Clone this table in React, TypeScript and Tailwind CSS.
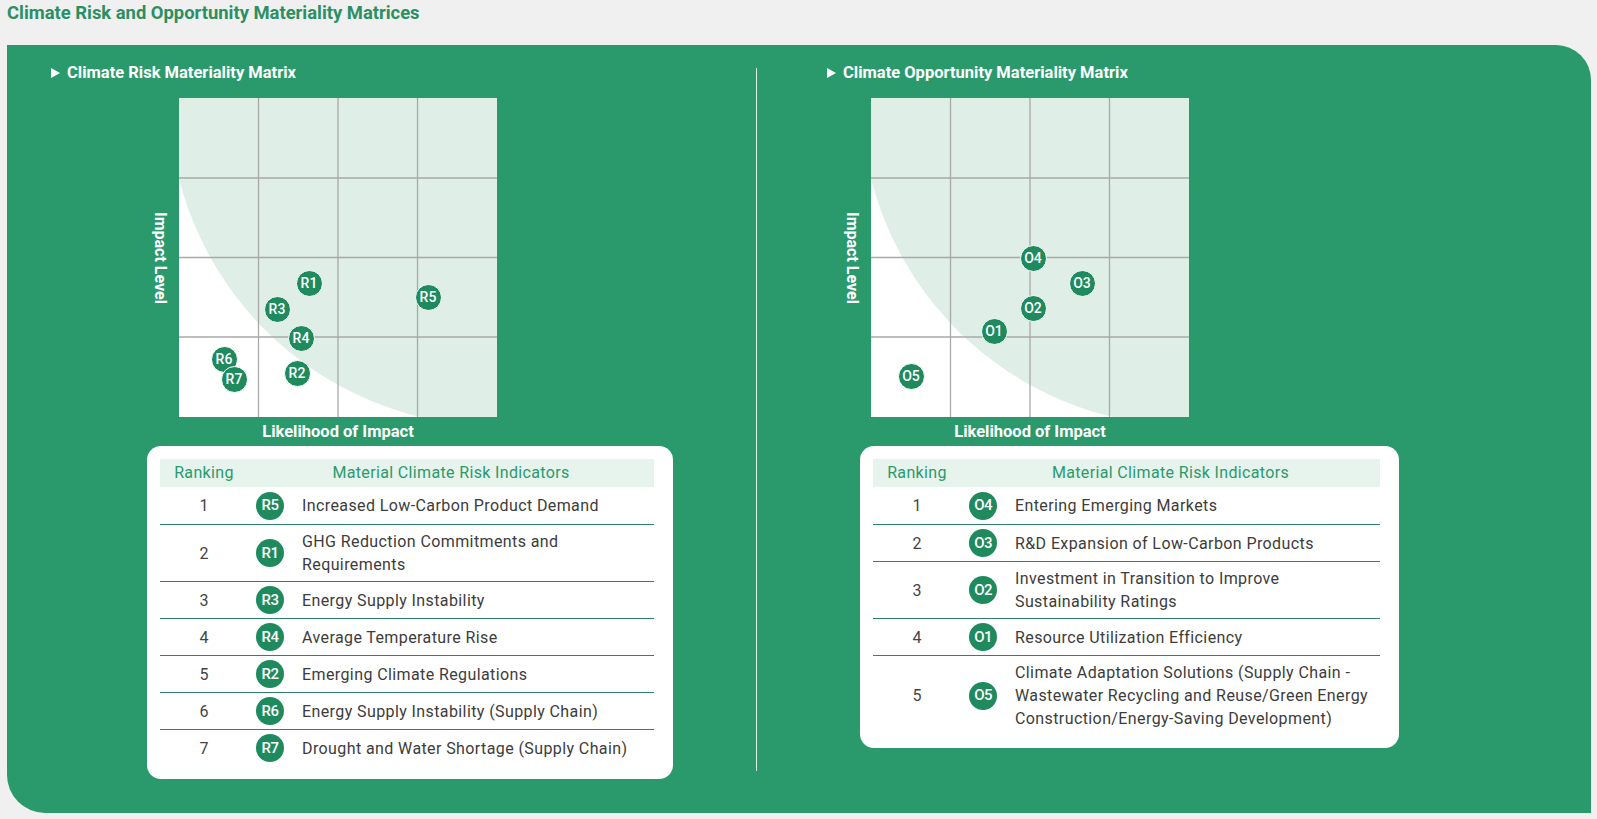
/*
 * Climate Risk and Opportunity Materiality Matrices
 * - two matrices with plotted items
 * - ranking tables below each matrix
 */

type Point = { id: string; x: number; y: number };
type Row = { rank: number; id: string; text: string };

const riskPoints: Point[] = [
  { id: "R1", x: 130, y: 185 },
  { id: "R3", x: 98, y: 211 },
  { id: "R5", x: 249, y: 199 },
  { id: "R4", x: 122, y: 240 },
  { id: "R2", x: 118, y: 275 },
  { id: "R6", x: 45, y: 261 },
  { id: "R7", x: 55, y: 281 },
];

const oppPoints: Point[] = [
  { id: "O4", x: 162, y: 160 },
  { id: "O3", x: 211, y: 185 },
  { id: "O2", x: 162, y: 210 },
  { id: "O1", x: 123, y: 233 },
  { id: "O5", x: 40, y: 278 },
];

const riskRows: Row[] = [
  { rank: 1, id: "R5", text: "Increased Low-Carbon Product Demand" },
  { rank: 2, id: "R1", text: "GHG Reduction Commitments and Requirements" },
  { rank: 3, id: "R3", text: "Energy Supply Instability" },
  { rank: 4, id: "R4", text: "Average Temperature Rise" },
  { rank: 5, id: "R2", text: "Emerging Climate Regulations" },
  { rank: 6, id: "R6", text: "Energy Supply Instability (Supply Chain)" },
  { rank: 7, id: "R7", text: "Drought and Water Shortage (Supply Chain)" },
];

const oppRows: Row[] = [
  { rank: 1, id: "O4", text: "Entering Emerging Markets" },
  { rank: 2, id: "O3", text: "R&D Expansion of Low-Carbon Products" },
  { rank: 3, id: "O2", text: "Investment in Transition to Improve Sustainability Ratings" },
  { rank: 4, id: "O1", text: "Resource Utilization Efficiency" },
  {
    rank: 5,
    id: "O5",
    text: "Climate Adaptation Solutions (Supply Chain - Wastewater Recycling and Reuse/Green Energy Construction/Energy-Saving Development)",
  },
];

function SectionTitle({ label }: { label: string }) {
  return (
    <div className="flex items-center gap-[7px] h-[20px] text-white text-[16.5px] font-bold leading-[20px]">
      <svg width="9" height="10" viewBox="0 0 9 10">
        <polygon points="0,0 9,5 0,10" fill="#ffffff" />
      </svg>
      <span>{label}</span>
    </div>
  );
}

function Matrix({ points }: { points: Point[] }) {
  const size = 318;
  const step = size / 4;
  return (
    <div className="relative w-[318px] h-[319px]">
      <svg width="318" height="319" viewBox="0 0 318 319" className="block">
        <rect x="0" y="0" width="318" height="319" fill="#ffffff" />
        <circle cx="318" cy="0" r="328" fill="#dfeee7" />
        {[1, 2, 3].map((i) => (
          <g key={i}>
            <line x1={i * step} y1="0" x2={i * step} y2="319" stroke="#a9a9a9" strokeWidth="1.3" />
            <line x1="0" y1={i * step + 0.5} x2="318" y2={i * step + 0.5} stroke="#a9a9a9" strokeWidth="1.3" />
          </g>
        ))}
      </svg>
      {points.map((p) => (
        <div
          key={p.id}
          className="absolute w-[27px] h-[27px] -ml-[13.5px] -mt-[13.5px] rounded-full bg-[#1f8a5e] border border-white flex items-center justify-center text-white text-[14px] font-medium leading-none"
          style={{ left: p.x, top: p.y }}
        >
          {p.id}
        </div>
      ))}
    </div>
  );
}

function MatrixBlock({ points, labelLeft }: { points: Point[]; labelLeft: number }) {
  return (
    <div className="flex items-center mt-[15px]" style={{ paddingLeft: labelLeft }}>
      <div className="w-[18px] [writing-mode:vertical-rl] text-white text-[16px] font-bold leading-[18px] text-center">
        Impact Level
      </div>
      <div className="ml-[10px]">
        <Matrix points={points} />
      </div>
    </div>
  );
}

function RankTable({ rows, width, left }: { rows: Row[]; width: number; left: number }) {
  return (
    <div
      className="mt-[5px] bg-white rounded-[14px] pt-[13px] pb-[13px] pl-[13px] pr-[19px]"
      style={{ width, marginLeft: left }}
    >
      <div className="flex h-[28px] items-center bg-[#e7f3ed] text-[#2a9a6c] text-[16px] tracking-[0.35px] leading-[28px]">
        <div className="w-[88px] text-center">Ranking</div>
        <div className="flex-1 text-center">Material Climate Risk Indicators</div>
      </div>
      {rows.map((r, i) => (
        <div
          key={r.id}
          className={`flex items-center min-h-[37px] ${i > 0 ? "border-t border-[#2e826b]" : ""}`}
        >
          <div className="w-[88px] text-center text-[16px] leading-[23px] text-[#444444]">{r.rank}</div>
          <div className="ml-[8px] w-[28px] h-[28px] shrink-0 rounded-full bg-[#1f8a5e] flex items-center justify-center text-white text-[15px] font-medium tracking-[-0.6px] leading-none">
            {r.id}
          </div>
          <div className="ml-[18px] flex-1 pr-[8px] py-[5px] text-[16px] leading-[23px] tracking-[0.4px] text-[#3c3c3c]">
            {r.text}
          </div>
        </div>
      ))}
    </div>
  );
}

export default function App() {
  return (
    <div className="min-h-screen bg-[#f0f0f0] font-['Roboto','Liberation_Sans',sans-serif]">
      <h2 className="pl-[7px] pt-[2px] text-[18.4px] font-bold leading-[22px] text-[#2b8f64]">
        Climate Risk and Opportunity Materiality Matrices
      </h2>

      <div className="ml-[7px] mt-[21px] w-[1584px] h-[768px] bg-[#2a9a6c] rounded-tr-[35px] rounded-bl-[38px] flex">
        {/* Risk */}
        <div className="w-[749px] pt-[18px]">
          <div className="pl-[44px]">
            <SectionTitle label="Climate Risk Materiality Matrix" />
          </div>
          <MatrixBlock points={riskPoints} labelLeft={144} />
          <div className="ml-[172px] w-[318px] mt-[6px] text-center text-white text-[16.5px] font-bold leading-[18px]">
            Likelihood of Impact
          </div>
          <RankTable rows={riskRows} width={526} left={140} />
        </div>

        {/* divider */}
        <div className="w-px bg-[#dff1e8] mt-[23px] mb-[42px]" />

        {/* Opportunity */}
        <div className="flex-1 pt-[18px]">
          <div className="pl-[70px]">
            <SectionTitle label="Climate Opportunity Materiality Matrix" />
          </div>
          <MatrixBlock points={oppPoints} labelLeft={86} />
          <div className="ml-[114px] w-[318px] mt-[6px] text-center text-white text-[16.5px] font-bold leading-[18px]">
            Likelihood of Impact
          </div>
          <RankTable rows={oppRows} width={539} left={103} />
        </div>
      </div>
    </div>
  );
}
